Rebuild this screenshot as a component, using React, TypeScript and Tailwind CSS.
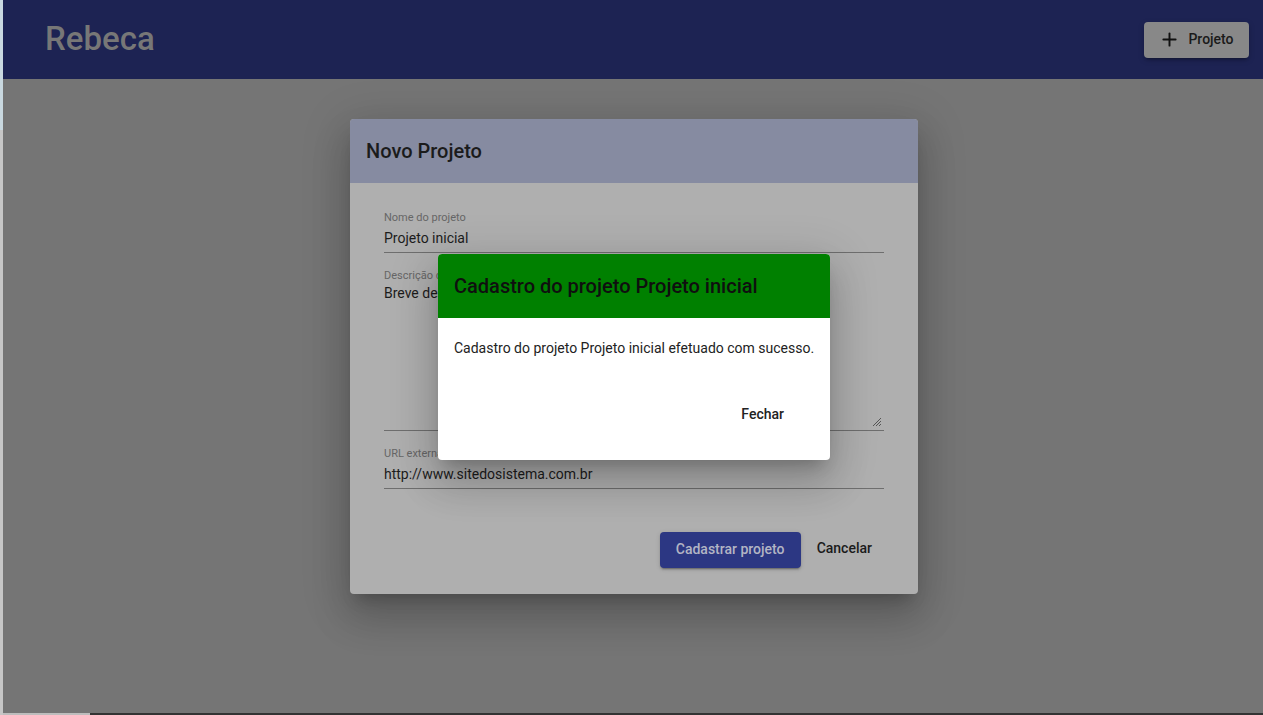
import { Plus } from "lucide-react";

const font = { fontFamily: "Roboto, 'Noto Sans', sans-serif" };

function Field({ label, value, tall }: { label: string; value: string; tall?: boolean }) {
  return (
    <div className={`relative border-b border-[#6e6e6e] ${tall ? "pb-0" : "pb-[4px]"}`}>
      <div className="text-[11px] leading-[14px] text-[#666]">{label}</div>
      <div
        className={`text-[14px] leading-[20px] text-[#1c1c1c] ${tall ? "mt-0 h-[147px]" : "mt-[3px]"}`}
      >
        {value}
      </div>
      {tall && (
        <svg className="absolute right-[2px] bottom-[3px]" width="10" height="10" viewBox="0 0 10 10">
          <path d="M9 1 L1 9 M9 4 L4 9 M9 7 L7 9" stroke="#555" strokeWidth="1" />
        </svg>
      )}
    </div>
  );
}

export default function App() {
  return (
    <div className="relative flex h-[715px] w-full overflow-hidden bg-[#757575]" style={font}>
      <div className="w-[3px] shrink-0 bg-[#c6c6c6]">
        <div className="h-[130px] bg-[#c9d8e0]" />
      </div>
      <div className="flex flex-1 flex-col">
        <header className="flex h-[79px] shrink-0 items-center justify-between bg-[#1d2353] pl-[42px] pr-[14px]">
          <h1 className="pb-[3px] text-[33px] font-medium leading-none text-[#777777]">Rebeca</h1>
          <button className="flex h-[36px] w-[105px] items-center justify-center gap-[8px] rounded-[4px] bg-[#888888] text-[14px] font-medium text-[#1a1a1a] shadow-[0_3px_3px_-2px_rgba(0,0,0,0.3),0_2px_6px_0_rgba(0,0,0,0.2)]">
            <Plus size={21} strokeWidth={2.2} className="text-[#111]" />
            Projeto
          </button>
        </header>
        <main className="flex-1" />
        <div className="flex h-[2px] shrink-0">
          <div className="w-[87px] bg-[#bdbdbd]" />
          <div className="flex-1 bg-[#333]" />
        </div>
      </div>

      <div className="absolute inset-0 flex items-center justify-center pb-[3px] pl-[5px]">
        <div className="w-[568px] overflow-hidden rounded-[4px] bg-[#afafaf] shadow-[0_11px_15px_-7px_rgba(0,0,0,0.2),0_24px_38px_3px_rgba(0,0,0,0.14),0_9px_46px_8px_rgba(0,0,0,0.12)]">
          <div className="flex h-[64px] items-center bg-[#868ba1] px-4 text-[20px] font-medium text-[#1b1b1b]">Novo Projeto</div>
          <div className="px-[34px] pt-[28px]">
            <Field label="Nome do projeto" value="Projeto inicial" />
            <div className="mt-[16px]">
              <Field label="Descrição do projeto" value="Breve descrição do projeto" tall />
            </div>
            <div className="mt-[16px]">
              <Field label="URL externa" value="http://www.sitedosistema.com.br" />
            </div>
          </div>
          <div className="flex justify-end gap-[8px] pb-[26px] pr-[38px] pt-[43px]">
            <button className="h-[36px] w-[141px] rounded-[4px] bg-[#2c3783] text-[14px] font-medium text-[#b3b5c4] shadow-[0_3px_1px_-2px_rgba(0,0,0,0.2),0_2px_2px_0_rgba(0,0,0,0.14),0_1px_5px_0_rgba(0,0,0,0.12)]">
              Cadastrar projeto
            </button>
            <button className="h-[34px] px-2 text-[14px] font-medium text-[#1b1b1b]">Cancelar</button>
          </div>
        </div>
      </div>

      <div className="absolute inset-0 flex items-center justify-center pb-[2px] pl-[5px]">
        <div className="w-[392px] overflow-hidden rounded-[4px] bg-white shadow-[0_11px_15px_-7px_rgba(0,0,0,0.2),0_24px_38px_3px_rgba(0,0,0,0.14),0_9px_46px_8px_rgba(0,0,0,0.12)]">
          <div className="flex h-[64px] items-center bg-[#008000] px-4 text-[20px] font-medium text-[#0f0f0f]">
            Cadastro do projeto Projeto inicial
          </div>
          <div className="whitespace-nowrap px-4 pt-[20px] text-[14px] leading-[20px] text-[#222]">
            Cadastro do projeto Projeto inicial efetuado com sucesso.
          </div>
          <div className="flex justify-end pb-[27px] pr-[38px] pt-[39px]">
            <button className="h-[36px] px-2 text-[14px] font-medium text-[#222]">Fechar</button>
          </div>
        </div>
      </div>
    </div>
  );
}
